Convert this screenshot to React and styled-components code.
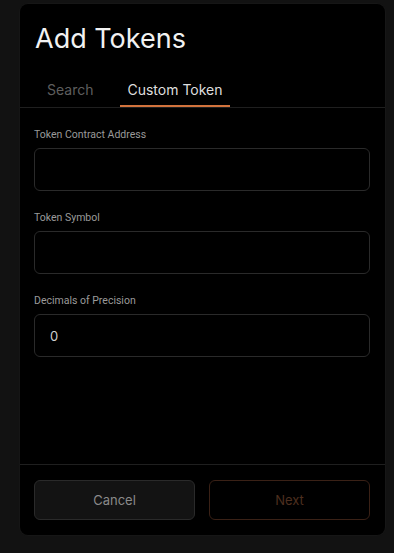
import React from 'react';
import styled, { createGlobalStyle } from 'styled-components';

const GlobalStyle = createGlobalStyle`
    html, body {
        margin: 0;
        padding: 0;
        background: #121212;
    }

    * {
        box-sizing: border-box;
    }
`;

const StyledPage = styled.div`
    width: 394px;
    height: 553px;
    padding: 4px 9px 0 20px;
    background: #121212;
`;

const StyledCard = styled.div`
    display: flex;
    flex-direction: column;
    height: 531px;
    background: #000;
    border-radius: 8px;
    box-shadow: 0 0 0 1px #161616;
    overflow: hidden;
`;

const StyledTitle = styled.h1`
    margin: 0;
    padding: 19px 0 0 15px;
    font-family: Inter, "Liberation Sans", sans-serif;
    font-size: 27px;
    font-weight: 400;
    line-height: 32px;
    color: #f2f2f2;
`;

const StyledTabs = styled.div`
    display: flex;
    gap: 20px;
    margin-top: 20px;
    padding-left: 20px;
    border-bottom: 1px solid #1f1f1f;
`;

const StyledTab = styled.div`
    padding: 7px 7px 7px 7px;
    font-family: Inter, "Liberation Sans", sans-serif;
    font-size: 14px;
    line-height: 16px;
    color: ${props => (props.active ? '#dedede' : '#5e5e5e')};
    border-bottom: 2px solid ${props => (props.active ? '#d2733d' : 'transparent')};
`;

const StyledForm = styled.div`
    flex: 1;
    display: flex;
    flex-direction: column;
    padding: 20px 15px 0 14px;
`;

const StyledField = styled.div`
    display: flex;
    flex-direction: column;
    margin-bottom: 20px;
`;

const StyledLabel = styled.label`
    font-family: Roboto, "Liberation Sans", sans-serif;
    font-size: 10.5px;
    line-height: 14px;
    color: #9a9a9a;
    margin-bottom: 6px;
`;

const StyledInput = styled.div`
    height: 43px;
    display: flex;
    align-items: center;
    padding: 0 15px;
    border: 1px solid #2a2a2a;
    border-radius: 6px;
    font-family: Inter, "Liberation Sans", sans-serif;
    font-size: 13px;
    color: #cfcfcf;
`;

const StyledFooter = styled.div`
    display: flex;
    gap: 14px;
    padding: 15px 15px 15px 14px;
    border-top: 1px solid #1f1f1f;
`;

const StyledButton = styled.div`
    flex: 1;
    height: 40px;
    display: flex;
    align-items: center;
    justify-content: center;
    border-radius: 6px;
    font-family: Inter, "Liberation Sans", sans-serif;
    font-size: 13px;
    background: ${props => (props.primary ? 'transparent' : '#131313')};
    border: 1px solid ${props => (props.primary ? '#3a2116' : '#2a2a2a')};
    color: ${props => (props.primary ? '#4d2f1f' : '#8a8a8a')};
`;

const fields = [
    { label: 'Token Contract Address', value: '' },
    { label: 'Token Symbol', value: '' },
    { label: 'Decimals of Precision', value: '0' }
];

function App() {
    return (
        <>
            <GlobalStyle />
            <StyledPage>
                <StyledCard>
                    <StyledTitle>Add Tokens</StyledTitle>
                    <StyledTabs>
                        <StyledTab>Search</StyledTab>
                        <StyledTab active>Custom Token</StyledTab>
                    </StyledTabs>
                    <StyledForm>
                        {fields.map(field => (
                            <StyledField key={field.label}>
                                <StyledLabel>{field.label}</StyledLabel>
                                <StyledInput>{field.value}</StyledInput>
                            </StyledField>
                        ))}
                    </StyledForm>
                    <StyledFooter>
                        <StyledButton>Cancel</StyledButton>
                        <StyledButton primary>Next</StyledButton>
                    </StyledFooter>
                </StyledCard>
            </StyledPage>
        </>
    );
}

export default App;
